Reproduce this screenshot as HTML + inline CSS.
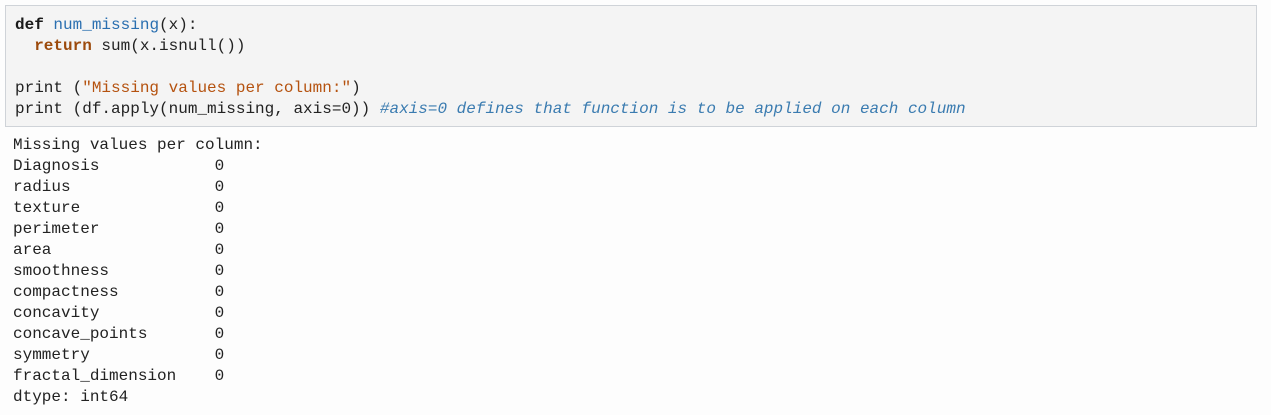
<!DOCTYPE html>
<html><head><style>
body{margin:0;background:#fdfdfd;width:1271px;height:415px;overflow:hidden;font-family:"Liberation Mono",monospace;font-size:16px;}
.box{position:absolute;left:5px;top:5px;width:1250px;height:120px;background:#f4f4f4;border:1px solid #cfd3d8;}
pre{margin:0;font-family:inherit;font-size:inherit;line-height:21px;color:#222;}
.code{position:absolute;left:9px;top:9px;}
.out{position:absolute;left:13px;top:135px;}
.k{color:#1a1a1a;font-weight:bold}
.r{color:#9c4a0c;font-weight:bold}
.f{color:#2a6fb0}
.s{color:#b5520f}
.c{color:#3a7bb0;font-style:italic}
</style></head><body>
<div class="box"><pre class="code"><span class="k">def</span> <span class="f">num_missing</span>(x):
  <span class="r">return</span> sum(x.isnull())

print (<span class="s">"Missing values per column:"</span>)
print (df.apply(num_missing, axis=0)) <span class="c">#axis=0 defines that function is to be applied on each column</span></pre></div>
<pre class="out">Missing values per column:
Diagnosis            0
radius               0
texture              0
perimeter            0
area                 0
smoothness           0
compactness          0
concavity            0
concave_points       0
symmetry             0
fractal_dimension    0
dtype: int64</pre>
</body></html>
